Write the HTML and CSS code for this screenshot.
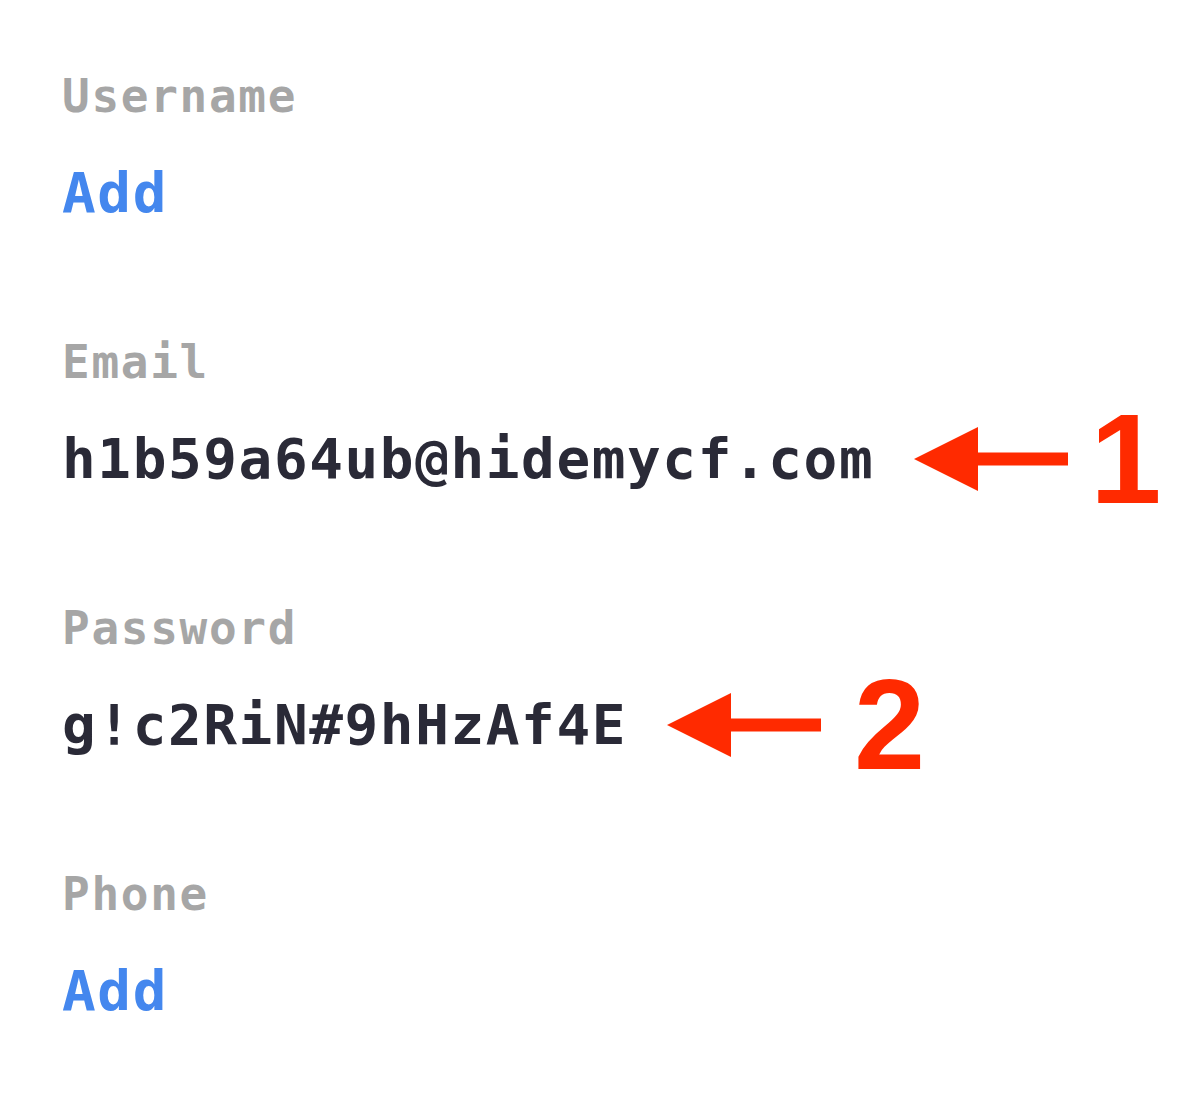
FILE: index.html
```html
<!DOCTYPE html>
<html>
  <head>
    <title>Account details</title>
    <link rel="stylesheet" href="styles.css">
  </head>
  <body>
    <div class="details">
      <div class="field">
        <div class="label">Username</div>
        <div class="value add">Add</div>
      </div>

      <div class="field">
        <div class="label">Email</div>
        <div class="row">
          <div class="value">h1b59a64ub@hidemycf.com</div>
          <svg class="arrow" viewBox="0 0 154 64" width="154" height="64">
            <polygon points="0,32 64,0 64,64" fill="#ff2a00"/>
            <rect x="60" y="25.5" width="94" height="13" fill="#ff2a00"/>
          </svg>
          <span class="marker marker-one">1</span>
        </div>
      </div>

      <div class="field">
        <div class="label">Password</div>
        <div class="row">
          <div class="value">g!c2RiN#9hHzAf4E</div>
          <svg class="arrow" viewBox="0 0 154 64" width="154" height="64">
            <polygon points="0,32 64,0 64,64" fill="#ff2a00"/>
            <rect x="60" y="25.5" width="94" height="13" fill="#ff2a00"/>
          </svg>
          <span class="marker marker-two">2</span>
        </div>
      </div>

      <div class="field">
        <div class="label">Phone</div>
        <div class="value add">Add</div>
      </div>
    </div>
  </body>
</html>
```

FILE: styles.css
```css
* {
  box-sizing: border-box;
  margin: 0;
  padding: 0;
}

body {
  background: #ffffff;
  font-family: "DejaVu Sans Mono", "Liberation Mono", monospace;
}

.details {
  padding: 66px 0 0 62px;
  display: flex;
  flex-direction: column;
  gap: 99px;
}

.field {
  display: flex;
  flex-direction: column;
  gap: 27px;
}

.label {
  font-size: 46px;
  line-height: 60px;
  font-weight: bold;
  letter-spacing: 1.7px;
  color: #a6a6a6;
}

.value {
  font-size: 56px;
  line-height: 80px;
  font-weight: bold;
  letter-spacing: 1.6px;
  color: #2a2a37;
}

.value.add {
  color: #4487ee;
}

.row {
  display: flex;
  align-items: center;
  height: 80px;
}

.arrow {
  margin-left: 40px;
  flex: none;
}

.marker {
  font-family: "Liberation Sans", Arial, sans-serif;
  font-size: 128px;
  line-height: 80px;
  font-weight: bold;
  color: #ff2a00;
}

.marker-one {
  margin-left: 22px;
}

.marker-two {
  margin-left: 33px;
}
```
